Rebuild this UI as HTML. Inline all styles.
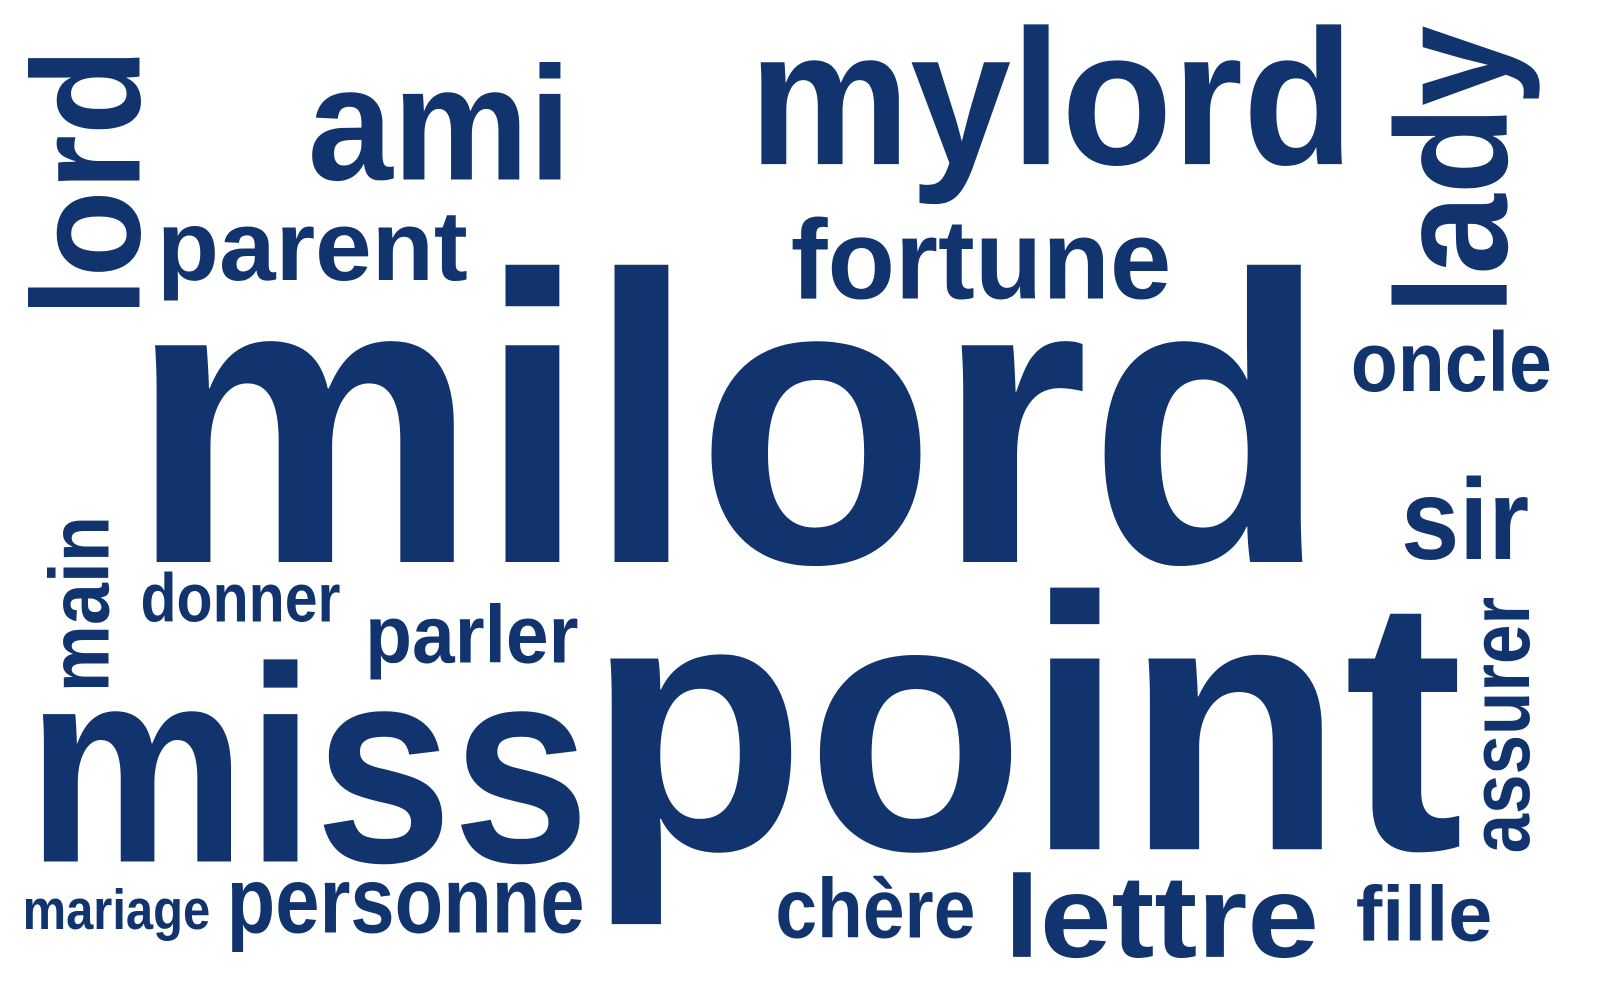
<!DOCTYPE html>
<html><head><meta charset="utf-8"><style>
html,body{margin:0;padding:0;background:#fff;width:1600px;height:1000px;overflow:hidden}
svg{display:block}
text{font-family:"Liberation Sans","DejaVu Sans",sans-serif;font-weight:bold;fill:#12346e}
</style></head><body>
<svg width="1600" height="1000" viewBox="0 0 1600 1000" xmlns="http://www.w3.org/2000/svg">
<g transform="scale(1.02564)">
<text x="126" y="548" font-size="400" textLength="1169" lengthAdjust="spacingAndGlyphs">milord</text>
<text x="572" y="828" font-size="352" textLength="855" lengthAdjust="spacingAndGlyphs">point</text>
<text x="26" y="840" font-size="272" textLength="549" lengthAdjust="spacingAndGlyphs">miss</text>
<text x="730" y="160" font-size="188" textLength="590" lengthAdjust="spacingAndGlyphs">mylord</text>
<text x="300" y="175" font-size="158" textLength="257" lengthAdjust="spacingAndGlyphs">ami</text>
<text x="771" y="291" font-size="110" textLength="371" lengthAdjust="spacingAndGlyphs">fortune</text>
<text x="153" y="273" font-size="97" textLength="303" lengthAdjust="spacingAndGlyphs">parent</text>
<text x="1317" y="381" font-size="82" textLength="196" lengthAdjust="spacingAndGlyphs">oncle</text>
<text x="1366" y="545" font-size="112" textLength="125" lengthAdjust="spacingAndGlyphs">sir</text>
<text x="137" y="606" font-size="67" textLength="195" lengthAdjust="spacingAndGlyphs">donner</text>
<text x="356" y="646" font-size="80" textLength="208" lengthAdjust="spacingAndGlyphs">parler</text>
<text x="22" y="906" font-size="55" textLength="183" lengthAdjust="spacingAndGlyphs">mariage</text>
<text x="221" y="909" font-size="91" textLength="349" lengthAdjust="spacingAndGlyphs">personne</text>
<text x="756" y="914" font-size="82" textLength="195" lengthAdjust="spacingAndGlyphs">chère</text>
<text x="979" y="933" font-size="114" textLength="307" lengthAdjust="spacingAndGlyphs">lettre</text>
<text x="1322" y="917" font-size="76" textLength="133" lengthAdjust="spacingAndGlyphs">fille</text>
<text transform="translate(136,309) rotate(-90)" font-size="150" textLength="262" lengthAdjust="spacingAndGlyphs">lord</text>
<text transform="translate(1469,307) rotate(-90)" font-size="155" textLength="282" lengthAdjust="spacingAndGlyphs">lady</text>
<text transform="translate(106,675) rotate(-90)" font-size="82" textLength="172" lengthAdjust="spacingAndGlyphs">main</text>
<text transform="translate(1491,832) rotate(-90)" font-size="82" textLength="250" lengthAdjust="spacingAndGlyphs">assurer</text>
</g>
</svg>
</body></html>
